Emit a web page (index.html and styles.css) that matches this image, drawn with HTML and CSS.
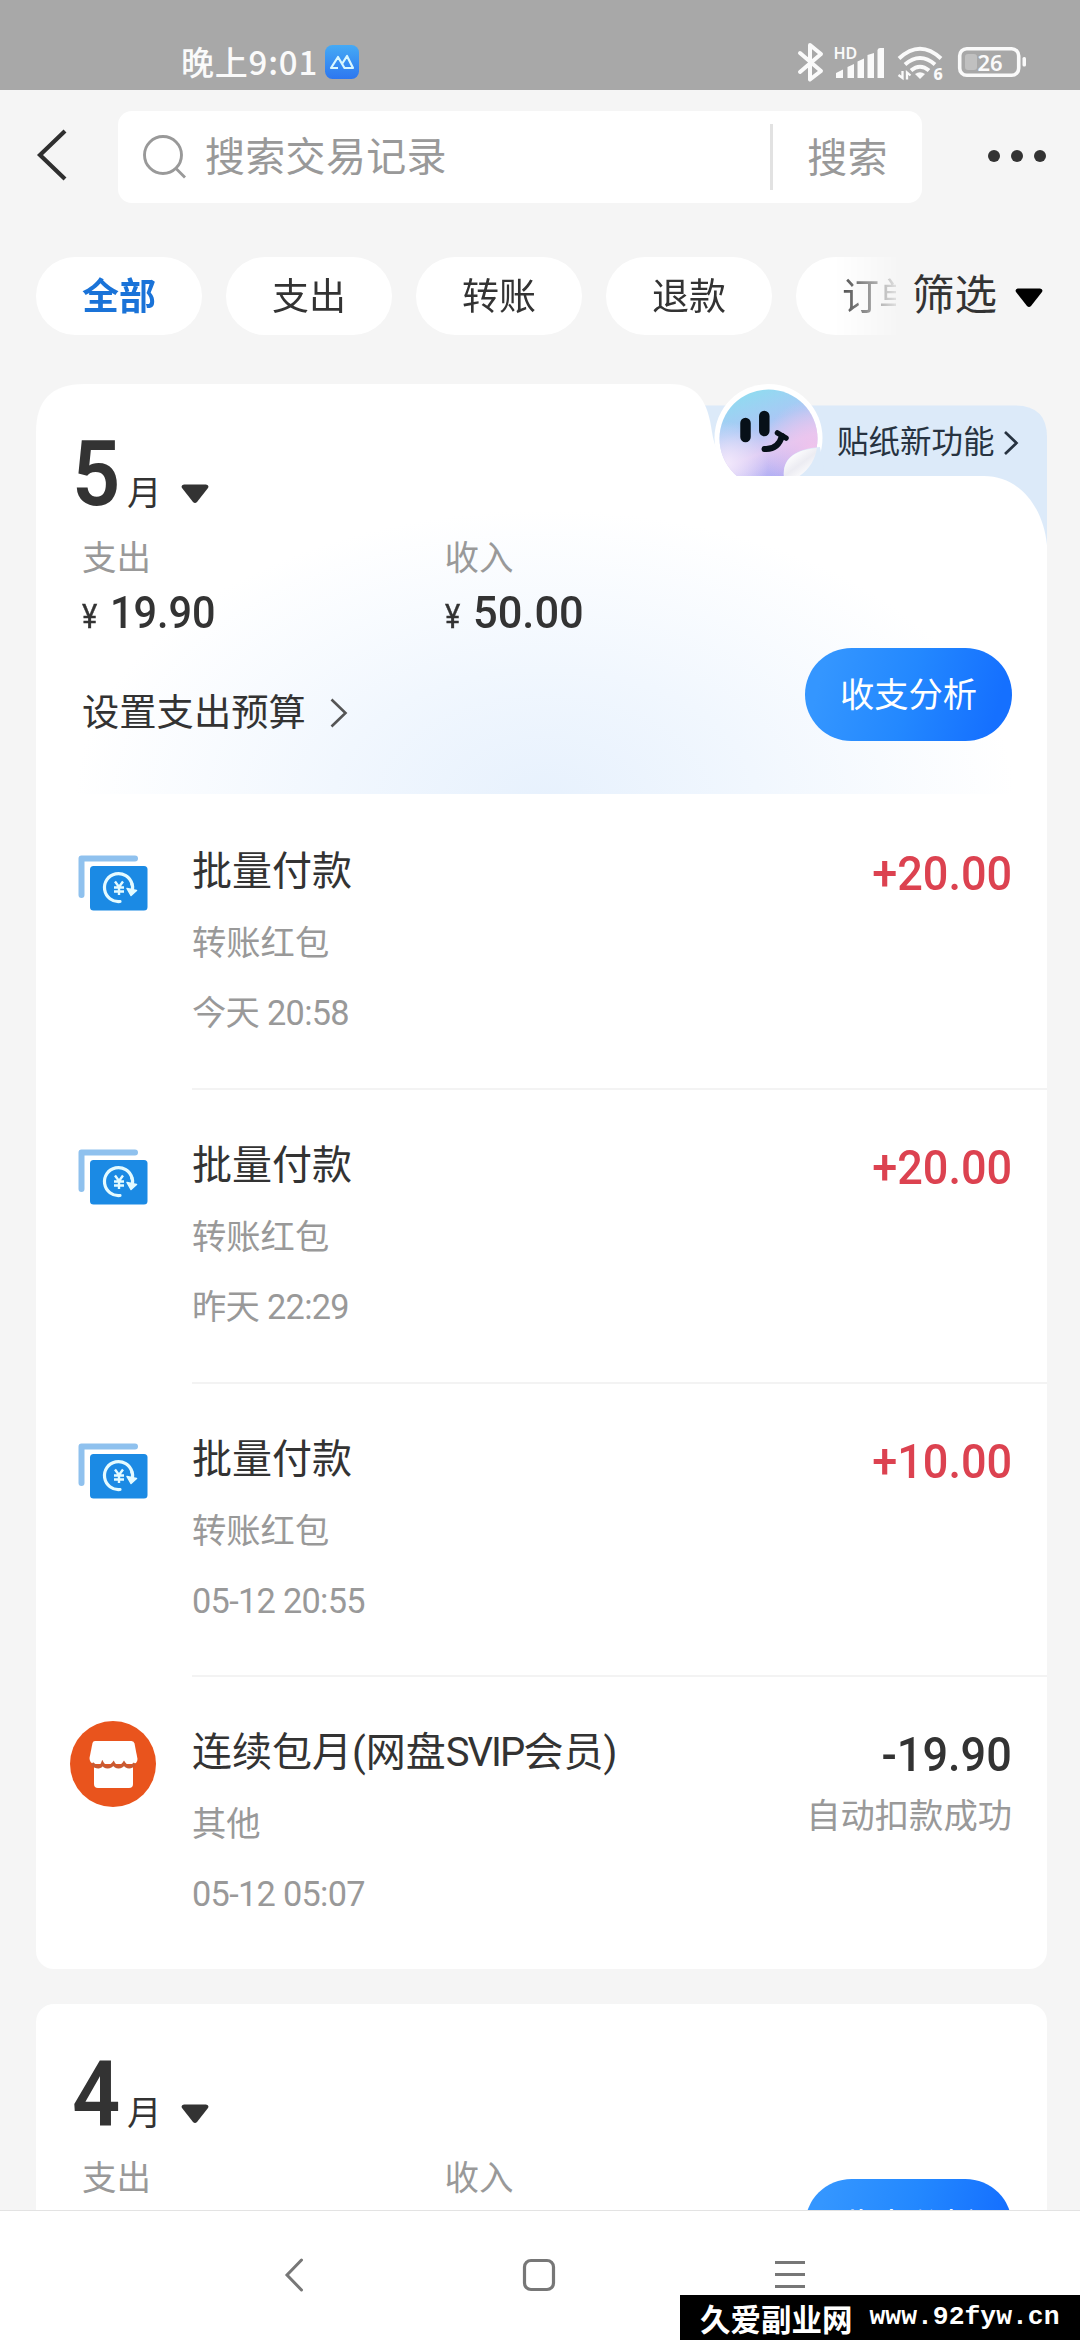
FILE: index.html
```html
<!DOCTYPE html>
<html lang="zh-CN">
<head>
<meta charset="utf-8">
<title>账单</title>
<link rel="stylesheet" href="styles.css">
</head>
<body>
<svg class="defs" width="0" height="0">
  <defs>
    <symbol id="batch-pay" viewBox="0 0 86 86">
      <path d="M11.500 55V18.500H65" fill="none" stroke="#8fc1ee" stroke-width="6" stroke-linecap="round" stroke-linejoin="round"/>
      <rect x="17" y="23" width="62" height="50" rx="5" fill="#fff"/>
      <rect x="20" y="26" width="57.500" height="44.500" rx="3.500" fill="#1b8ae4"/>
      <path d="M50 61.500A14 14 0 1 1 62 44" fill="none" stroke="#e4fbff" stroke-width="3.200" stroke-linecap="round"/>
      <path d="M57 48.500L66.500 50.500L61 55.500Z" fill="#e4fbff" stroke="#e4fbff" stroke-width="1.500" stroke-linejoin="round"/>
      <path d="M61.500 43Q63.500 47 62 51" fill="none" stroke="#e4fbff" stroke-width="3.200"/>
      <path d="M45 41.500L49 47L53 41.500M49 47V55M44 47.500H54M44 51.500H54" fill="none" stroke="#e4fbff" stroke-width="2.400"/>
    </symbol>
    <symbol id="caret" viewBox="0 0 28 20">
      <path d="M3 .5H25Q28.500 1 27 4L16 18Q14 20 12 18L1 4Q-.5 1 3 .5Z"/>
    </symbol>
  </defs>
</svg>

<header class="status">
  <div class="status-left">
    <span class="clock">晚上9:01</span>
    <svg class="app-icon" width="34" height="34" viewBox="0 0 34 34">
      <defs><linearGradient id="app" x1="0" y1="0" x2="0" y2="1"><stop offset="0" stop-color="#45aaf5"/><stop offset="1" stop-color="#2d77f0"/></linearGradient></defs>
      <rect width="34" height="34" rx="7.500" fill="url(#app)"/>
      <path d="M13 23H6L13 12L19.500 23H28L22 11L17 19" fill="none" stroke="#d9f7ff" stroke-width="2.200" stroke-linejoin="round"/>
    </svg>
  </div>
  <svg class="status-icons" width="230" height="44" viewBox="797 41 230 44" fill="none" stroke="#fafafa">
    <path d="M800 53L821 71L810 79.500V45L821 54L800 72" stroke-width="4" stroke-linecap="round" stroke-linejoin="round"/>
    <text class="hd" x="833.500" y="58.500">HD</text>
    <g fill="#fafafa" stroke="none">
      <path d="M836 78V73L843 69.500V78ZM847.500 78V67L854 64V78ZM857.500 78V61.500L864 58.500V78ZM867.500 78V55L874 53V78ZM877.500 78V50Q878 48 880 48H884V78Z"/>
      <path d="M915 74Q920 70.500 925 74L920 79Z"/>
      <rect x="1022.500" y="57" width="3.500" height="9.500" rx="1.500"/>
    </g>
    <path d="M899 58.500Q920 39 941 58.500M905 64.500Q920 51.500 935 64.500M911 70.500Q920 63 929 70.500" stroke-width="4"/>
    <path d="M902.500 71V78L898.500 75M907 79.500V72.500L910.500 75.500" stroke-width="2.300"/>
    <text class="wifi-gen" x="933.500" y="79.500">6</text>
    <rect x="959.700" y="48.700" width="59" height="26.600" rx="7" stroke-width="3.600"/>
    <rect x="965" y="54" width="12" height="16" rx="3" fill="#c0c0c0" stroke="none"/>
    <text class="battery" x="990" y="71">26</text>
  </svg>
</header>

<nav class="topbar">
  <svg class="back" width="32" height="52" viewBox="0 0 32 52"><path d="M29 2L4 26L29 50" fill="none" stroke="#2f2f2f" stroke-width="4.200"/></svg>
  <div class="search">
    <svg width="46" height="46" viewBox="0 0 46 46" fill="none" stroke="#999" stroke-width="2.900"><circle cx="21" cy="21" r="18.500"/><path d="M34 34.500L43 43.500"/></svg>
    <span class="placeholder">搜索交易记录</span>
    <span class="search-button">搜索</span>
  </div>
  <div class="more"><i></i><i></i><i></i></div>
</nav>

<div class="filters">
  <div class="chips">
    <span class="chip chip-active">全部</span>
    <span class="chip">支出</span>
    <span class="chip">转账</span>
    <span class="chip">退款</span>
    <span class="chip">订单</span>
  </div>
  <div class="filter">筛选<svg width="28" height="20"><use href="#caret"/></svg></div>
</div>

<main class="list">
  <section class="month month-open">
    <div class="summary">
      <svg class="tab-shape" width="1011" height="410" viewBox="36 384 1011 410">
        <defs>
          <linearGradient id="face" x1=".3" y1="0" x2=".65" y2="1">
            <stop offset="0" stop-color="#8fdcf0"/><stop offset=".35" stop-color="#a9c8f5"/><stop offset=".62" stop-color="#dcc8f3"/><stop offset="1" stop-color="#9ba2f4"/>
          </linearGradient>
          <radialGradient id="pink" cx=".95" cy=".6" r=".5"><stop offset="0" stop-color="#f0c4ec"/><stop offset="1" stop-color="#f0c4ec" stop-opacity="0"/></radialGradient>
          <radialGradient id="pale" cx=".08" cy=".75" r=".42"><stop offset="0" stop-color="#f1e8fb"/><stop offset="1" stop-color="#f1e8fb" stop-opacity="0"/></radialGradient>
          <linearGradient id="curl" x1=".2" y1=".2" x2=".8" y2=".9"><stop offset="0" stop-color="#fff"/><stop offset=".5" stop-color="#ececf2"/><stop offset="1" stop-color="#fff"/></linearGradient>
          <radialGradient id="glow" gradientUnits="userSpaceOnUse" cx="0" cy="0" r="1" gradientTransform="translate(545 800) scale(470 290)">
            <stop offset="0" stop-color="#e7f1fd"/><stop offset=".45" stop-color="#f1f7fe"/><stop offset="1" stop-color="#fff"/>
          </radialGradient>
          <clipPath id="above-card"><rect x="700" y="380" width="347" height="96"/></clipPath>
        </defs>
        <path d="M690 405.500H1015Q1047 405.500 1047 437V560H690Z" fill="#dceaf9"/>
        <path d="M36 794V432Q36 384 84 384H670C698 384 708 402 712 432C716 460 734 476 764 476H984C1018 476 1043 505 1047 545V794Z" fill="url(#glow)"/>
        <g clip-path="url(#above-card)">
          <circle cx="768.500" cy="438" r="54" fill="#fff"/>
          <circle cx="768.500" cy="438.500" r="49" fill="url(#face)"/>
          <circle cx="768.500" cy="438.500" r="49" fill="url(#pink)"/>
          <circle cx="768.500" cy="438.500" r="49" fill="url(#pale)"/>
          <path d="M784 477C782 459 794 449 820 447L824 470L806 480Z" fill="#dceaf9"/>
          <path d="M784 477C782 459 795 450 817 448C815 460 809 470 798 477Z" fill="url(#curl)"/>
          <g fill="none" stroke="#071018" stroke-linecap="round">
            <path d="M745.500 423V437M764.300 416V431" stroke-width="10.500"/>
            <path d="M764.500 449Q778 450 782 436" stroke-width="6"/>
            <path d="M777.500 433L786 438" stroke-width="5.500"/>
          </g>
        </g>
      </svg>
      <div class="sticker-link">贴纸新功能<svg width="16" height="26" viewBox="0 0 16 26"><path d="M2 2L13.500 13L2 24" fill="none" stroke="#273341" stroke-width="2.700"/></svg></div>
      <div class="month-title"><b>5</b><span>月</span><svg width="28" height="20"><use href="#caret"/></svg></div>
      <div class="totals">
        <div><div class="label">支出</div><div class="total"><small>¥</small><span class="total-narrow">19.90</span></div></div>
        <div><div class="label">收入</div><div class="total"><small>¥</small><span>50.00</span></div></div>
      </div>
      <div class="budget">
        <span class="budget-link">设置支出预算<svg width="18" height="30" viewBox="0 0 18 30"><path d="M1.500 1.500L15.500 15L1.500 28.500" fill="none" stroke="#555" stroke-width="2.600"/></svg></span>
        <span class="analyse">收支分析</span>
      </div>
    </div>

    <article class="item">
      <svg class="item-icon" width="86" height="86"><use href="#batch-pay"/></svg>
      <div class="item-body">
        <div><h3>批量付款</h3><p>转账红包</p><time>今天 20:58</time></div>
        <div class="item-side"><strong class="income">+20.00</strong></div>
      </div>
    </article>
    <article class="item">
      <svg class="item-icon" width="86" height="86"><use href="#batch-pay"/></svg>
      <div class="item-body">
        <div><h3>批量付款</h3><p>转账红包</p><time>昨天 22:29</time></div>
        <div class="item-side"><strong class="income">+20.00</strong></div>
      </div>
    </article>
    <article class="item">
      <svg class="item-icon" width="86" height="86"><use href="#batch-pay"/></svg>
      <div class="item-body">
        <div><h3>批量付款</h3><p>转账红包</p><time>05-12 20:55</time></div>
        <div class="item-side"><strong class="income">+10.00</strong></div>
      </div>
    </article>
    <article class="item">
      <svg class="item-icon" width="86" height="86" viewBox="0 0 86 86">
        <circle cx="43" cy="43" r="43" fill="#e9541d"/>
        <path d="M25 20H61.500Q64 20 64.500 22.500L67.500 38Q67.500 43 62 43H24Q19.500 42 19.500 37L22.500 22Q23 20 25 20Z" fill="#fff"/>
        <path d="M24 45H63V63Q63 67 59 67H28Q24 67 24 63Z" fill="#fff"/>
        <path d="M22 42.500C27 47.500 31 46.500 32.500 42.500C35 47 40 47 43.500 42.500C46 47 51 47 54 42.500C57 47 61 47 65 42.500" fill="none" stroke="#c95a32" stroke-width="3.200"/>
      </svg>
      <div class="item-body">
        <div><h3>连续包月(网盘<span class="latin">SVIP</span>会员)</h3><p>其他</p><time>05-12 05:07</time></div>
        <div class="item-side"><strong>-19.90</strong><p>自动扣款成功</p></div>
      </div>
    </article>
  </section>

  <section class="month month-next">
    <div class="month-title"><b>4</b><span>月</span><svg width="28" height="20"><use href="#caret"/></svg></div>
    <div class="next-row">
      <div class="totals">
        <div class="label">支出</div>
        <div class="label">收入</div>
      </div>
      <span class="analyse">收支分析</span>
    </div>
  </section>
</main>

<footer class="navbar">
  <svg width="20" height="36" viewBox="0 0 20 36"><path d="M17.500 3L3 18L17.500 33" fill="none" stroke="#777" stroke-width="3" stroke-linecap="round"/></svg>
  <svg width="34" height="36" viewBox="0 0 34 36"><rect x="2.500" y="3.500" width="29" height="29" rx="6.500" fill="none" stroke="#777" stroke-width="3.200"/></svg>
  <svg width="32" height="36" viewBox="0 0 32 36"><path d="M1 5.500H31M1 17.500H31M1 29.500H31" stroke="#777" stroke-width="3"/></svg>
</footer>
<div class="watermark"><span>久爱副业网</span><span class="url">www.92fyw.cn</span></div>
</body>
</html>
```

FILE: styles.css
```css
* { box-sizing: border-box; }

body {
  position: relative;
  display: flex;
  flex-direction: column;
  width: 1080px;
  height: 2340px;
  margin: 0;
  overflow: hidden;
  background: #f5f5f5;
  color: #333;
  font-family: Roboto, "Noto Sans CJK SC", sans-serif;
  white-space: nowrap;
}

svg { display: block; flex: none; }
.defs { position: absolute; }
h3, p, time { display: block; margin: 0; font-weight: 400; }

/* system status bar */
.status {
  display: flex;
  flex: none;
  justify-content: space-between;
  height: 90px;
  padding: 41px 53px 0 181px;
  background: #a8a8a8;
}
.status-left { display: flex; gap: 10px; }
.clock {
  width: 134px;
  color: #fafafa;
  font: 500 33px/40px "Noto Sans CJK SC", sans-serif;
  letter-spacing: .8px;
}
.app-icon { margin-top: 4px; }
.status-icons text { fill: #fafafa; stroke: none; font-family: "Noto Sans", sans-serif; font-weight: 600; }
.status-icons .hd { font-size: 16px; }
.status-icons .wifi-gen { font-size: 16px; font-weight: 800; }
.status-icons .battery { font-size: 22px; text-anchor: middle; }

/* search */
.topbar {
  display: flex;
  flex: none;
  align-items: center;
  height: 92px;
  margin-top: 21px;
  padding-left: 36px;
}
.back { margin-top: -4px; }
.search {
  display: flex;
  align-items: center;
  width: 804px;
  height: 92px;
  margin-left: 50px;
  padding-left: 24px;
  border-radius: 14px;
  background: #fff;
  color: #999;
  font-size: 40px;
}
.placeholder { width: 565px; height: 66px; margin-left: 17px; line-height: 67px; }
.placeholder, .search-button { letter-spacing: .3px; }
.search-button {
  flex: 1;
  height: 66px;
  border-left: 3px solid #e2e2e2;
  line-height: 69px;
  text-align: center;
}
.more { display: flex; gap: 11px; margin: -2px 0 0 66px; }
.more i { width: 12px; height: 12px; border-radius: 50%; background: #333; }

/* filter chips */
.filters {
  display: flex;
  flex: none;
  height: 78px;
  margin: 54px 0 49px 36px;
}
.chips {
  display: flex;
  gap: 24px;
  width: 860px;
  overflow: hidden;
  -webkit-mask-image: linear-gradient(90deg, #000 795px, transparent 868px);
  mask-image: linear-gradient(90deg, #000 795px, transparent 868px);
}
.chip {
  flex: none;
  width: 166px;
  border-radius: 39px;
  background: #fff;
  font-size: 37px;
  line-height: 81px;
  text-align: center;
}
.chip-active { color: #1a73d8; font-weight: 700; }
.filter {
  display: flex;
  align-items: center;
  gap: 18px;
  margin-left: 16px;
  font-size: 42.500px;
  line-height: 82px;
}
.filter svg { fill: #000; margin-top: 4px; }

/* month cards */
.list { flex: 1; min-height: 0; overflow: hidden; padding: 0 33px 0 36px; }
.month-open { border-radius: 45px 0 18px 18px; background: linear-gradient(transparent 300px, #fff 300px); }
.summary { position: relative; height: 410px; padding-top: 44px; }
.tab-shape { position: absolute; inset: 0; }
.summary > :not(.tab-shape) { position: relative; }
.summary > .sticker-link {
  position: absolute;
  top: 37px;
  left: 801px;
  display: flex;
  align-items: center;
  gap: 8px;
  color: #273341;
  font-size: 31.500px;
  line-height: 44px;
}
.month-title { display: flex; align-items: baseline; height: 92px; padding-left: 36px; }
.month-title b { width: 55px; font-size: 91px; line-height: 92px; font-weight: 600; transform: scaleX(.93); transform-origin: 0 0; }
.month-title span { width: 54px; font-size: 34.500px; line-height: 40px; }
.month-title svg { fill: #333; transform: translateY(-1px); }
.totals { display: grid; grid-template-columns: 362.500px 150px; margin-top: 15px; padding-left: 46px; }
.label { color: #999; font-size: 34.500px; line-height: 46px; }
.total { display: flex; align-items: baseline; margin-top: 6px; line-height: 52px; }
.total small { width: 28px; font-size: 33px; font-weight: 400; -webkit-text-stroke: .4px; line-height: 40px; transform: scaleX(.88); transform-origin: 0 0; }
.total span { font-size: 45px; font-weight: 500; transform: scaleX(.965); transform-origin: 0 0; }
.total .total-narrow { transform: scaleX(.92); }
.budget { display: flex; align-items: flex-start; justify-content: space-between; margin-top: 9px; padding: 0 35px 0 46px; }
.budget-link { display: flex; align-items: center; gap: 24px; margin-top: 40px; font-size: 37.300px; line-height: 50px; }
.analyse {
  flex: none;
  width: 207px;
  height: 93px;
  border-radius: 47px;
  background: linear-gradient(105deg, #3496ff 10%, #2388ff 50%, #1570ff 90%);
  color: #fff;
  font-size: 34.300px;
  line-height: 95px;
  text-align: center;
}

/* transactions */
.item { display: flex; height: 293.750px; padding-left: 34px; }
.item-icon { margin: 46px 36px 0 0; }
.item-body {
  display: flex;
  flex: 1;
  justify-content: space-between;
  padding: 50px 35px 0 0;
  border-top: 2px solid #f3f3f3;
}
.summary + .item .item-body { border-color: transparent; }
.item h3 { font-size: 40px; line-height: 52px; }
.item h3 .latin { letter-spacing: -1.900px; }
.item p, .item time { color: #999; font-size: 34.300px; line-height: 46px; }
.item h3 + p { margin-top: 22px; }
.item time { margin-top: 24px; letter-spacing: -.7px; }
.item-side { text-align: right; }
.item-side strong { display: block; font-size: 49px; line-height: 55px; font-weight: 500; transform: scaleX(.92); transform-origin: 100% 0; }
.item-side p { margin-top: 11px; }
.income { color: #dc4250; }

.month-next { height: 400px; margin-top: 35px; padding-top: 44px; border-radius: 18px; background: #fff; }
.next-row { display: flex; justify-content: space-between; padding-right: 35px; }
.next-row .analyse { margin-top: 39px; }

/* system navigation */
.navbar {
  display: flex;
  flex: none;
  align-items: flex-start;
  height: 130px;
  padding: 46px 0 0 284px;
  border-top: 1px solid #e3e3e3;
  background: #fff;
}
.navbar svg + svg { margin-left: 218px; }
.watermark {
  position: absolute;
  right: 0;
  bottom: 0;
  display: flex;
  align-items: center;
  gap: 17px;
  width: 400px;
  height: 45px;
  padding-left: 20px;
  background: #000;
  color: #fff;
  font: 700 30.500px/42px "Noto Sans CJK SC", sans-serif;
}
.watermark .url { font: 700 26.400px/45px "Liberation Mono", monospace; }
```
